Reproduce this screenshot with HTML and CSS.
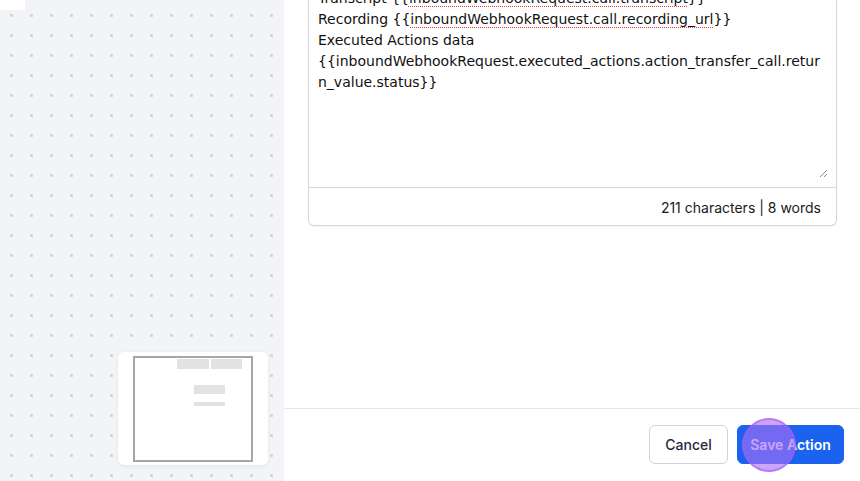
FILE: index.html
```html
<!DOCTYPE html>
<html>
<head>
<meta charset="utf-8">
<link rel="stylesheet" href="styles.css">
</head>
<body>
<div class="canvas">
  <div class="node-stub"></div>
  <div class="minimap">
    <div class="mm-node mm-a"></div>
    <div class="mm-node mm-b"></div>
    <div class="mm-node mm-c"></div>
    <div class="mm-node mm-d"></div>
    <div class="mm-view"></div>
  </div>
</div>
<div class="panel">
  <div class="scroll">
    <div class="editor">
      <div class="ta">
        <div class="line">Transcript {{<span class="spell">inboundWebhookRequest.call.transcript</span>}}</div>
        <div class="line">Recording {{<span class="spell">inboundWebhookRequest.call.recording_url</span>}}</div>
        <div class="line">Executed Actions data</div>
        <div class="line">{{inboundWebhookRequest.executed_actions.action_transfer_call.retur</div>
        <div class="line">n_value.status}}</div>
        <svg class="grip" width="9" height="9" viewBox="0 0 9 9"><path d="M8 1 L1 8 M8 5 L5 8" stroke="#8a8a8a" stroke-width="1" fill="none"/></svg>
      </div>
      <div class="count">211 characters | 8 words</div>
    </div>
  </div>
  <div class="actions">
    <button class="btn btn-cancel">Cancel</button>
    <button class="btn btn-save">Save Action</button>
    <span class="click"></span>
  </div>
</div>
</body>
</html>
```

FILE: styles.css
```css
html, body {
  margin: 0;
  padding: 0;
}
body {
  width: 860px;
  height: 481px;
  display: flex;
  overflow: hidden;
  background: #fff;
  font-family: Inter, "Liberation Sans", sans-serif;
}
.canvas {
  position: relative;
  width: 284px;
  flex: none;
  background-color: #f3f4f8;
  background-image: radial-gradient(circle at 10.5px 10.5px, #d3d5dc 0, #d3d5dc 1.3px, transparent 1.8px);
  background-size: 20px 20px;
  background-position: 1px 5px;
}
.node-stub {
  width: 25px;
  height: 10px;
  background: #fff;
}
.minimap {
  position: absolute;
  left: 118px;
  top: 352px;
  width: 150px;
  height: 113px;
  background: #fff;
  border-radius: 6px;
  box-shadow: 0 1px 4px rgba(0, 0, 0, 0.07);
}
.mm-view {
  position: absolute;
  left: 15px;
  top: 4px;
  width: 116px;
  height: 102px;
  border: 2px solid #a3a7ad;
}
.mm-node {
  position: absolute;
  background: #e2e2e2;
}
.mm-a { left: 59px; top: 7px; width: 32px; height: 10px; }
.mm-b { left: 93px; top: 7px; width: 31px; height: 10px; }
.mm-c { left: 76px; top: 33px; width: 31px; height: 9px; }
.mm-d { left: 76px; top: 50px; width: 31px; height: 4px; }

.panel {
  flex: 1;
  display: flex;
  flex-direction: column;
  min-width: 0;
}
.scroll {
  flex: 1;
  overflow: hidden;
  padding: 0 23px 0 24px;
}
.editor {
  margin-top: -20px;
  border: 1px solid #d4d6da;
  border-top: none;
  border-radius: 0 0 6px 6px;
  box-shadow: 0 1px 2px rgba(0, 0, 0, 0.04);
}
.ta {
  position: relative;
  height: 208px;
  box-sizing: border-box;
  padding: 8px 9px;
  border-bottom: 1px solid #d4d6da;
  font-family: "DejaVu Sans", Verdana, sans-serif;
  font-size: 14px;
  line-height: 21px;
  color: #111;
  letter-spacing: 0;
}
.line {
  white-space: nowrap;
}
.spell {
  text-decoration: underline dotted #e53935;
  text-underline-offset: 3px;
  text-decoration-thickness: 1px;
}
.grip {
  position: absolute;
  right: 8px;
  bottom: 9px;
}
.count {
  height: 37px;
  display: flex;
  align-items: center;
  justify-content: flex-end;
  padding: 1px 15px 0 0;
  box-sizing: border-box;
  font-size: 14px;
  color: #1a1a1a;
}
.actions {
  position: relative;
  height: 73px;
  flex: none;
  border-top: 1px solid #e5e7eb;
  display: flex;
  justify-content: flex-end;
  align-items: flex-start;
  gap: 9px;
  padding: 16px 16px 0 0;
  box-sizing: border-box;
}
.btn {
  height: 39px;
  border-radius: 6px;
  font-family: Inter, "Liberation Sans", sans-serif;
  font-size: 14px;
  padding: 0;
  cursor: pointer;
}
.btn-cancel {
  width: 79px;
  background: #fff;
  border: 1px solid #cfd3d8;
  color: #1f2937;
  font-weight: 500;
}
.btn-save {
  width: 107px;
  background: #1b63ee;
  border: 1px solid #1b63ee;
  color: #fff;
  font-weight: 600;
}
.click {
  position: absolute;
  left: 458px;
  top: 9px;
  width: 50px;
  height: 50px;
  border-radius: 50%;
  background: rgba(170, 110, 245, 0.62);
  border: 2px solid rgba(168, 85, 247, 0.55);
}
```
